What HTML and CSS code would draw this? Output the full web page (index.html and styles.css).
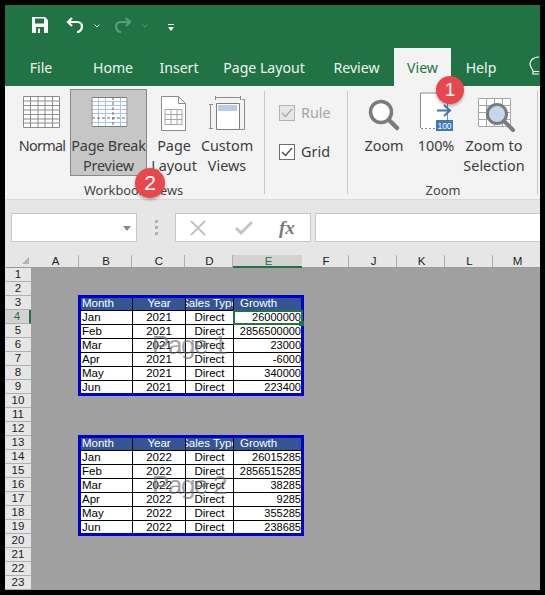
FILE: index.html
```html
<!DOCTYPE html>
<html lang="en">
<head>
<meta charset="utf-8">
<title>Excel Page Break Preview</title>
<link rel="stylesheet" href="styles.css">
</head>
<body>
<div class="app">
  <header class="titlebar">
    <div class="qat">
      <svg class="qi save" width="16" height="16" viewBox="0 0 16 16"><path fill="#fff" d="M0 0h13l3 3v13H0z"/><path fill="#217346" d="M3 1.500h9v5H3zM4 10h8v6H4z"/><path fill="#fff" d="M6 11.500h2v4.500H6z"/></svg>
      <svg class="qi undo" width="18" height="16" viewBox="0 0 18 16"><path fill="none" stroke="#fff" stroke-width="2.200" d="M6 1 2 5l4 4M2 5h9c3 0 5 2 5 4.500S14 15 11 15"/></svg>
      <svg class="qi chev" width="6" height="4" viewBox="0 0 6 4"><path fill="none" stroke="#fff" d="M.5.500 3 3 5.500.5"/></svg>
      <svg class="qi redo" width="18" height="16" viewBox="0 0 18 16"><path fill="none" stroke="#5b9c7c" stroke-width="2.200" d="M12 1l4 4-4 4M16 5H7C4 5 2 7 2 9.500S4 15 7 15"/></svg>
      <svg class="qi chev" width="6" height="4" viewBox="0 0 6 4"><path fill="none" stroke="#5b9c7c" d="M.5.500 3 3 5.500.5"/></svg>
      <svg class="qi cust" width="6" height="7" viewBox="0 0 6 7"><path fill="#fff" d="M0 0h6v1H0zM0 3h6L3 7z"/></svg>
    </div>
    <nav class="tabs">
      <span class="tab t-file">File</span>
      <span class="tab t-home">Home</span>
      <span class="tab t-insert">Insert</span>
      <span class="tab t-layout">Page Layout</span>
      <span class="tab t-review">Review</span>
      <span class="tab t-view">View</span>
      <span class="tab t-help">Help</span>
      <svg class="bulb" width="12" height="22" viewBox="0 0 12 22"><path fill="none" stroke="#fff" stroke-width="1.200" d="M12 1C6 1 3 4.500 3 8c0 3 2 4.500 3 6.500V18h6M6 15.500h6"/></svg>
    </nav>
  </header>

  <section class="ribbon">
    <div class="group g-views">
      <div class="btns">
        <div class="rb b-normal">
          <svg width="44" height="44" viewBox="0 0 44 44"><path fill="#fff" d="M3 4h37v32H3z"/><path fill="none" stroke="#8c8c8c" d="M3.500 4.500h36v31h-36zM3.500 9h36M3.500 13.500h36M3.500 18h36M3.500 22.500h36M3.500 27h36M3.500 31h36M10.500 4.500v31M18 4.500v31M25 4.500v31M32.500 4.500v31"/></svg>
          <span class="lbl">Normal</span>
        </div>
        <div class="rb b-break">
          <svg width="44" height="44" viewBox="0 0 44 44"><path fill="#fff" d="M4.500 5h36v30h-36z"/><path fill="none" stroke="#a9c4e4" d="M5 9.500h35M5 13.500h35M5 17.500h35M5 21.500h35M5 30.500h35M11.500 5v30M18.500 5v30M33.500 5v30"/><path fill="none" stroke="#7f7f7f" d="M5 5.500h35v29H5z"/><path fill="none" stroke="#666" stroke-dasharray="3 2" d="M26 5v30M5 26h35"/></svg>
          <span class="lbl">Page Break<br>Preview</span>
        </div>
        <div class="rb b-layout">
          <svg width="44" height="44" viewBox="0 0 44 44"><path fill="#fff" stroke="#8c8c8c" d="M9.500 4.500h17l7 7v27h-24z"/><path fill="none" stroke="#8c8c8c" d="M26.500 4.500v7h7"/><path fill="none" stroke="#a6a6a6" d="M13 17.500h17v15H13zM13 22.500h17M13 27.500h17M19 17.500v15M25 17.500v15"/></svg>
          <span class="lbl">Page<br>Layout</span>
        </div>
        <div class="rb b-custom">
          <svg width="44" height="44" viewBox="0 0 44 44"><path fill="none" stroke="#8c8c8c" d="M10.500 4v4M35.500 4v4M10.500 5.500h25M37 7.500h2.500v30H33M4 12.500h4M4 36.500h4M5.500 12.500v24"/><path fill="#fff" stroke="#7f7f7f" d="M11.500 11.500h23v26h-23z"/><path fill="#b8cde6" d="M13 13h19v6H13z"/></svg>
          <span class="lbl">Custom<br>Views</span>
        </div>
      </div>
      <div class="gname">Workbook Views</div>
    </div>
    <div class="sep s-a"></div>
    <div class="checks">
      <label class="chk off"><span class="box"><svg width="12" height="10" viewBox="0 0 12 10"><path fill="none" stroke="#a6a6a6" stroke-width="1.200" d="M1 5l3.500 3.500L11 1"/></svg></span>Rule</label>
      <label class="chk"><span class="box"><svg width="12" height="10" viewBox="0 0 12 10"><path fill="none" stroke="#444" stroke-width="1.200" d="M1 5l3.500 3.500L11 1"/></svg></span>Grid</label>
    </div>
    <div class="sep"></div>
    <div class="group g-zoom">
      <div class="btns">
        <div class="rb b-zoom">
          <svg width="44" height="44" viewBox="0 0 44 44"><circle cx="19" cy="20" r="10.500" fill="#fff" stroke="#7b7b7b" stroke-width="3.500"/><path stroke="#7b7b7b" stroke-width="4.500" stroke-linecap="round" d="M27 28l8 8"/></svg>
          <span class="lbl">Zoom</span>
        </div>
        <div class="rb b-100">
          <svg width="44" height="44" viewBox="0 0 44 44"><path fill="#fff" d="M6 1h27v36H6z"/><path fill="none" stroke="#8c8c8c" d="M6.500 1v35M6.500 1h26.500M33.500 1v28"/><path fill="none" stroke="#8c8c8c" stroke-dasharray="2 2" d="M7 36.500h15M35 36.500h3"/><path fill="none" stroke="#3f78b5" stroke-width="2" d="M23 18.500h13M30 13l6 5.500-6 5.500"/><path fill="#3f78b5" d="M22 28h17v11H22z"/><text class="t100" x="30.500" y="37">100</text></svg>
          <span class="lbl">100%</span>
        </div>
        <div class="rb b-sel">
          <svg width="44" height="44" viewBox="0 0 44 44"><path fill="#fff" d="M6 6h33v28H6z"/><path fill="#b8cde6" d="M14 13h17v15H14z"/><path fill="none" stroke="#a6a6a6" d="M6.500 6.500h32v28h-32zM6.500 13.500h32M6.500 20.500h32M6.500 27.500h32M14.500 6.500v28M22.500 6.500v28M30.500 6.500v28"/><circle cx="25" cy="22" r="9.500" fill="#c4d7ec" stroke="#7b7b7b" stroke-width="3"/><path stroke="#7b7b7b" stroke-width="4" stroke-linecap="round" d="M32 29l9 9"/></svg>
          <span class="lbl">Zoom to<br>Selection</span>
        </div>
      </div>
      <div class="gname">Zoom</div>
    </div>
    <div class="sep s-end"></div>
    <span class="badge b1">1</span>
    <span class="badge b2">2</span>
  </section>

  <section class="fbar">
    <div class="namebox"><span class="ddl"></span></div>
    <div class="grip"><i></i><i></i><i></i></div>
    <div class="fbtns">
      <svg width="16" height="16" viewBox="0 0 16 16"><path stroke="#c4c4c4" stroke-width="2" d="M1 1l14 14M15 1L1 15"/></svg>
      <svg width="18" height="16" viewBox="0 0 18 16"><path fill="none" stroke="#c4c4c4" stroke-width="3" d="M1 8l5 5L17 2"/></svg>
      <span class="fx">fx</span>
    </div>
    <div class="finput"></div>
  </section>

  <div class="colheads">
    <div class="corner"><span class="tri"></span></div>
    <span class="ch c-a">A</span>
    <span class="ch c-b">B</span>
    <span class="ch c-c">C</span>
    <span class="ch c-d">D</span>
    <span class="ch c-e">E</span>
    <span class="ch c-f">F</span>
    <span class="ch c-j">J</span>
    <span class="ch c-k">K</span>
    <span class="ch c-l">L</span>
    <span class="ch c-m">M</span>
  </div>

  <div class="sheet">
    <div class="rowheads">
      <span>1</span><span>2</span><span>3</span><span class="on">4</span><span>5</span><span>6</span><span>7</span><span>8</span><span>9</span><span>10</span><span>11</span><span>12</span><span>13</span><span>14</span><span>15</span><span>16</span><span>17</span><span>18</span><span>19</span><span>20</span><span>21</span><span>22</span><span>23</span>
    </div>
    <div class="pane">
      <div class="page">
        <table class="data">
          <colgroup><col class="w1"><col class="w2"><col class="w3"><col class="w4"></colgroup>
          <thead><tr><th class="l">Month</th><th>Year</th><th><div class="clip">Sales Type</div></th><th class="g">Growth</th></tr></thead>
          <tbody>
            <tr><td>Jan</td><td class="m">2021</td><td class="m">Direct</td><td class="r">26000000</td></tr>
            <tr><td>Feb</td><td class="m">2021</td><td class="m">Direct</td><td class="r">2856500000</td></tr>
            <tr><td>Mar</td><td class="m">2021</td><td class="m">Direct</td><td class="r">23000</td></tr>
            <tr><td>Apr</td><td class="m">2021</td><td class="m">Direct</td><td class="r">-6000</td></tr>
            <tr><td>May</td><td class="m">2021</td><td class="m">Direct</td><td class="r">340000</td></tr>
            <tr class="last"><td>Jun</td><td class="m">2021</td><td class="m">Direct</td><td class="r">223400</td></tr>
          </tbody>
        </table>
        <div class="wm">Page 1</div>
        <div class="sel"><i></i></div>
      </div>
      <div class="page">
        <table class="data">
          <colgroup><col class="w1"><col class="w2"><col class="w3"><col class="w4"></colgroup>
          <thead><tr><th class="l">Month</th><th>Year</th><th><div class="clip">Sales Type</div></th><th class="g">Growth</th></tr></thead>
          <tbody>
            <tr><td>Jan</td><td class="m">2022</td><td class="m">Direct</td><td class="r">26015285</td></tr>
            <tr><td>Feb</td><td class="m">2022</td><td class="m">Direct</td><td class="r">2856515285</td></tr>
            <tr><td>Mar</td><td class="m">2022</td><td class="m">Direct</td><td class="r">38285</td></tr>
            <tr><td>Apr</td><td class="m">2022</td><td class="m">Direct</td><td class="r">9285</td></tr>
            <tr><td>May</td><td class="m">2022</td><td class="m">Direct</td><td class="r">355285</td></tr>
            <tr class="last"><td>Jun</td><td class="m">2022</td><td class="m">Direct</td><td class="r">238685</td></tr>
          </tbody>
        </table>
        <div class="wm">Page 2</div>
      </div>
    </div>
  </div>
</div>
</body>
</html>
```

FILE: styles.css
```css
* { box-sizing: border-box; }
html, body { margin: 0; height: 100%; background: #000; }
body { padding: 5px; overflow: hidden; }

.app {
  width: 535px;
  height: 585px;
  overflow: hidden;
  position: relative;
  background: #a0a0a0;
  font-family: "Noto Sans", "Open Sans", sans-serif;
  display: flex;
  flex-direction: column;
}

/* title bar */
.titlebar { background: #217346; height: 81px; flex: none; }
.qat { height: 43px; display: flex; align-items: center; padding: 0 0 3px 27px; }
.qi { flex: none; display: block; }
.undo { margin-left: 18px; }
.chev { margin-left: 10px; margin-top: 2px; }
.redo { margin-left: 14px; }
.cust { margin-left: 20px; margin-top: 4px; }

.tabs { height: 38px; display: flex; align-items: stretch; font-size: 14.100px; color: #eef5f1; position: relative; }
.tab { display: flex; align-items: center; justify-content: center; }
.t-file { width: 72px; }
.t-home { width: 72px; }
.t-insert { width: 60px; }
.t-layout { width: 110px; }
.t-review { width: 75px; }
.t-view { width: 57px; background: #f3f3f3; color: #217346; }
.t-help { width: 60px; }
.bulb { margin: 8px 0 0 16px; flex: none; }

/* ribbon */
.ribbon {
  position: relative;
  height: 114px;
  flex: none;
  background: #f3f3f3;
  border-bottom: 1px solid #d9d9d9;
  display: flex;
  font-size: 14.400px;
  color: #3c3c3c;
}
.group { display: flex; flex-direction: column; }
.g-views { margin-left: 9px; }
.g-zoom { margin-left: 12px; }
.btns { display: flex; height: 90px; padding-top: 3px; }
.rb { display: flex; flex-direction: column; align-items: center; height: 87px; padding-top: 3px; text-align: center; line-height: 20px; white-space: nowrap; }
.rb svg { flex: none; display: block; }
.b-normal { width: 56px; }
.b-normal .lbl { letter-spacing: -.7px; }
.b-break { width: 77px; background: #c6c6c6; border: 1px solid #8a8a8a; padding-top: 2px; }
.b-break .lbl { letter-spacing: -.2px; }
.b-layout { width: 54px; }
.b-custom { width: 52px; }
.b-zoom { width: 48px; }
.b-100 { width: 48px; margin-left: 4px; }
.b-sel { width: 64px; margin-left: 2px; }
.gname { text-align: center; font-size: 12.800px; line-height: 20px; margin-top: 4px; color: #444; }
.sep { width: 1px; background: #c8c8c8; margin: 5px 0 5px; flex: none; }
.s-a { margin-left: 11px; }
.s-end { margin-left: 11px; }
.t100 { font: 8.500px "Liberation Sans", sans-serif; fill: #fff; text-anchor: middle; }

.checks { width: 82px; padding: 19px 0 0 14px; display: flex; flex-direction: column; gap: 23px; }
.chk { display: flex; align-items: center; gap: 6px; height: 16px; line-height: 16px; }
.chk.off { color: #a6a6a6; }
.box { width: 16px; height: 16px; flex: none; background: #fff; border: 1px solid #6e6e6e; display: flex; align-items: center; justify-content: center; }
.off .box { background: #e6e6e6; border-color: #b4b4b4; }

.badge {
  position: absolute;
  border-radius: 50%;
  background: #e8474d;
  color: #fff;
  font-family: "Liberation Sans", sans-serif;
  display: flex;
  align-items: center;
  justify-content: center;
  box-shadow: 0 2px 3px rgba(0,0,0,.3);
}
.b1 { left: 431px; top: -10px; width: 28px; height: 28px; font-size: 19px; }
.b2 { left: 130px; top: 82px; width: 30px; height: 30px; font-size: 21px; }

/* formula bar */
.fbar { height: 55px; flex: none; background: #e6e6e6; display: flex; padding: 13px 0 0 6px; align-items: flex-start; }
.namebox { width: 126px; height: 29px; background: #fff; border: 1px solid #c8c8c8; position: relative; }
.ddl { position: absolute; right: 5px; top: 12px; border-style: solid; border-color: #8a8a8a transparent transparent; border-width: 5px 4px 0; }
.grip { width: 38px; height: 29px; display: flex; flex-direction: column; align-items: center; justify-content: center; gap: 3px; }
.grip i { width: 3px; height: 3px; background: #b0b0b0; display: block; }
.fbtns { width: 136px; height: 29px; background: #fff; border: 1px solid #c8c8c8; display: flex; align-items: center; padding-left: 14px; }
.fbtns svg:nth-child(2) { margin-left: 29px; }
.fx { font: italic 700 19px "Liberation Serif", serif; color: #7a7a7a; margin-left: 26px; }
.finput { flex: 1; height: 29px; margin-left: 4px; background: #fff; border: 1px solid #c8c8c8; border-right: 0; }

/* headers */
.colheads { height: 13px; flex: none; background: #e6e6e6; display: flex; font: 11.500px/13px "Liberation Sans", sans-serif; color: #222; border-bottom: 1px solid #9a9a9a; }
.corner { width: 27px; position: relative; }
.tri { position: absolute; right: 2px; bottom: 3px; border-style: solid; border-width: 0 0 7px 7px; border-color: transparent transparent #b4b4b4; }
.ch { text-align: center; padding-left: 2px; border-right: 1px solid #b0b0b0; flex: none; }
.c-a { width: 48px; }
.c-b { width: 53px; }
.c-c { width: 53px; }
.c-d { width: 48px; }
.c-e { width: 69px; background: #d2d2d2; color: #217346; border-bottom: 2px solid #217346; height: 13px; border-right: 0; }
.c-f { width: 47px; }
.c-j { width: 48px; }
.c-k { width: 48px; }
.c-l { width: 48px; }
.c-m { width: 47px; border-right: 0; }

.sheet { flex: 1; display: flex; min-height: 0; }
.rowheads { width: 26px; flex: none; background: #e6e6e6; display: flex; flex-direction: column; font: 11.500px/13px "Liberation Sans", sans-serif; color: #222; }
.rowheads span { height: 14px; flex: none; text-align: center; border-bottom: 1px solid #b0b0b0; }
.rowheads .on { background: #d2d2d2; color: #217346; border-right: 2px solid #217346; }

.pane { flex: 1; padding: 27px 0 0 47px; background: #a0a0a0; display: flex; flex-direction: column; gap: 39px; align-items: flex-start; }
.page { position: relative; width: 226px; }

.data { table-layout: fixed; width: 226px; border-collapse: separate; border-spacing: 0; border: 3px solid #0000d0; background: #fff; font: 11.500px/12px "Liberation Sans", sans-serif; color: #000; }
.w1 { width: 52px; }
.w2 { width: 53px; }
.w3 { width: 48px; }
.w4 { width: 67px; }
.data th { height: 12px; padding: 0; font-weight: 400; line-height: 10px; vertical-align: top; color: #fff; background: #335593; border-right: 1px solid #000; overflow: hidden; white-space: nowrap; text-align: center; }
.data th:last-child, .data td:last-child { border-right: 0; }
.data th.l { text-align: left; padding-left: 1px; }
.data th.g { text-align: left; padding-left: 6px; }
.clip { display: flex; justify-content: center; overflow: hidden; white-space: nowrap; height: 12px; }
.data td { height: 14px; padding: 0 1px; border-top: 1px solid #000; border-right: 1px solid #000; overflow: hidden; white-space: nowrap; line-height: 13px; }
.data .last td { height: 13px; line-height: 12px; }
.m { text-align: center; }
.data .r { text-align: right; font-size: 11px; padding: 0; }

.wm { position: absolute; left: 74px; top: 36px; font: 26px/28px "Liberation Sans", sans-serif; letter-spacing: -1.400px; color: rgba(105,105,115,.65); white-space: nowrap; pointer-events: none; }

.sel { position: absolute; left: 155px; top: 15px; width: 70px; height: 15px; border: 2px solid #217346; }
.sel i { position: absolute; right: -3px; bottom: -3px; width: 5px; height: 5px; background: #217346; display: block; }
```
